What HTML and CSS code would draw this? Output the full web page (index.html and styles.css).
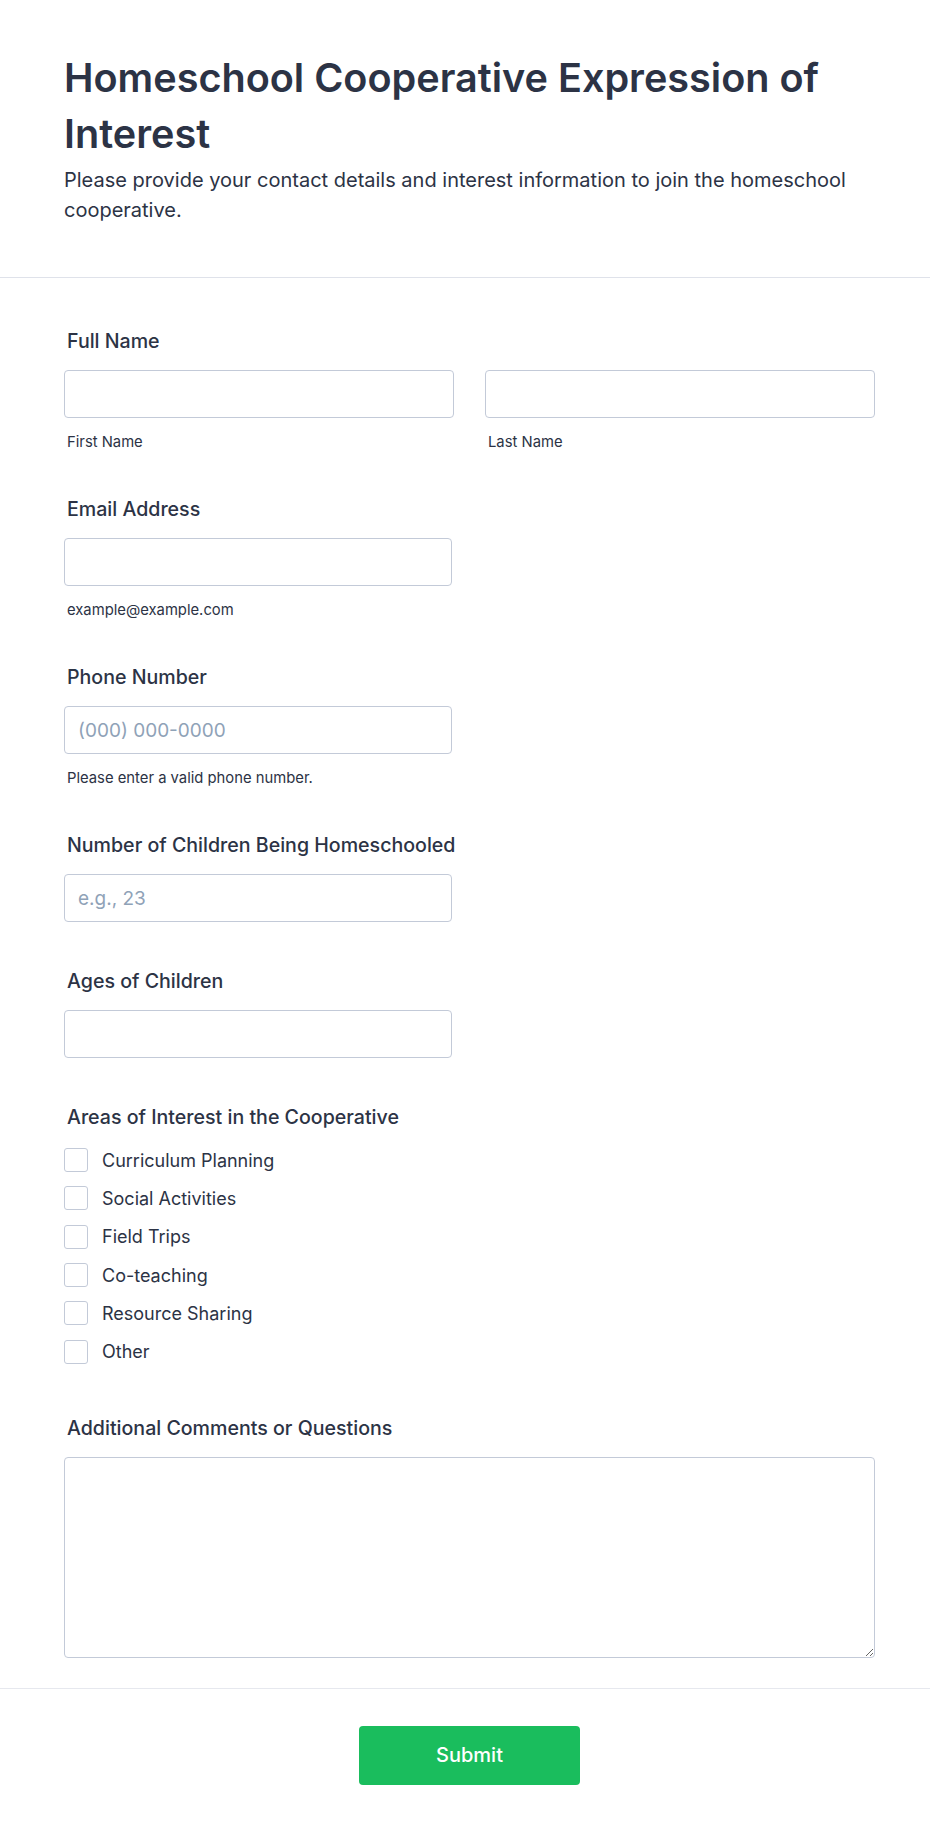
FILE: index.html
```html
<!DOCTYPE html>
<html lang="en">
<head>
<meta charset="utf-8">
<title>Homeschool Cooperative Expression of Interest</title>
<link rel="stylesheet" href="styles.css">
</head>
<body>
<header class="header">
  <h1 class="title">Homeschool Cooperative Expression of Interest</h1>
  <p class="subtitle">Please provide your contact details and interest information to join the homeschool cooperative.</p>
</header>
<form class="form">
  <div class="fields">
    <div class="field">
      <label class="label">Full Name</label>
      <div class="name-row">
        <div class="name-col">
          <input class="input" type="text">
          <span class="sublabel">First Name</span>
        </div>
        <div class="name-col">
          <input class="input" type="text">
          <span class="sublabel">Last Name</span>
        </div>
      </div>
    </div>
    <div class="field">
      <label class="label">Email Address</label>
      <input class="input half" type="email">
      <span class="sublabel">example@example.com</span>
    </div>
    <div class="field">
      <label class="label">Phone Number</label>
      <input class="input half" type="tel" placeholder="(000) 000-0000">
      <span class="sublabel">Please enter a valid phone number.</span>
    </div>
    <div class="field plain">
      <label class="label">Number of Children Being Homeschooled</label>
      <input class="input half" type="text" placeholder="e.g., 23">
    </div>
    <div class="field plain">
      <label class="label">Ages of Children</label>
      <input class="input half" type="text">
    </div>
    <div class="field">
      <label class="label">Areas of Interest in the Cooperative</label>
      <div class="checks">
        <label class="check"><span class="box"></span>Curriculum Planning</label>
        <label class="check"><span class="box"></span>Social Activities</label>
        <label class="check"><span class="box"></span>Field Trips</label>
        <label class="check"><span class="box"></span>Co-teaching</label>
        <label class="check"><span class="box"></span>Resource Sharing</label>
        <label class="check"><span class="box"></span>Other</label>
      </div>
    </div>
    <div class="field">
      <label class="label">Additional Comments or Questions</label>
      <textarea class="textarea"></textarea>
    </div>
  </div>
  <div class="footer">
    <button class="submit" type="button">Submit</button>
  </div>
</form>
</body>
</html>
```
FILE: styles.css
```css
* { box-sizing: border-box; }
html, body { margin: 0; padding: 0; background: #ffffff; }
body {
  font-family: Inter, "Noto Sans", sans-serif;
  color: #2c3345;
  width: 930px;
}
.header {
  padding: 50px 55px 52px 64px;
  border-bottom: 1px solid #dfe2ea;
}
.title {
  margin: 0;
  font-size: 39.6px;
  line-height: 56px;
  font-weight: 600;
  color: #2c3345;
}
.subtitle {
  margin: 3px 0 0;
  font-size: 20px;
  line-height: 30px;
  font-weight: 400;
  color: #2c3345;
}
.form { margin: 0; }
.fields {
  padding: 51px 55px 30px 64px;
  display: flex;
  flex-direction: column;
  gap: 45px;
  border-bottom: 1px solid #e6e8ee;
}
.field { display: flex; flex-direction: column; }
.field.plain { padding-bottom: 2px; }
.label {
  font-size: 19.6px;
  line-height: 24px;
  font-weight: 500;
  padding-left: 3px;
  margin-bottom: 17px;
  color: #2c3345;
}
.name-row { display: flex; gap: 31px; }
.name-col { flex: 1; display: flex; flex-direction: column; }
.input {
  height: 48px;
  border: 1px solid #c3cad8;
  border-radius: 4px;
  padding: 0 13px;
  font-family: Inter, sans-serif;
  font-size: 19px;
  color: #2c3345;
  background: #fff;
  outline: none;
}
.input::placeholder { color: #8fa2b7; }
.input.half { width: 388px; }
.sublabel {
  font-size: 14.8px;
  line-height: 20px;
  margin-top: 14px;
  padding-left: 3px;
  color: #2c3345;
}
.checks { display: flex; flex-direction: column; margin-top: -5px; }
.check {
  display: flex;
  align-items: center;
  height: 38.3px;
  font-size: 18px;
  color: #2c3345;
}
.box {
  width: 24px;
  height: 24px;
  border: 1px solid #c3cad8;
  border-radius: 3px;
  margin-right: 14px;
  flex: none;
}
.textarea {
  height: 201px;
  border: 1px solid #c3cad8;
  border-radius: 4px;
  resize: vertical;
  font-family: Inter, sans-serif;
  font-size: 18px;
  outline: none;
}
.footer {
  display: flex;
  justify-content: center;
  padding: 37px 55px 50px 64px;
}
.submit {
  width: 221px;
  height: 59px;
  background: #1abd5d;
  border: none;
  border-radius: 4px;
  color: #ffffff;
  font-family: Inter, sans-serif;
  font-size: 20px;
  font-weight: 500;
}
```
